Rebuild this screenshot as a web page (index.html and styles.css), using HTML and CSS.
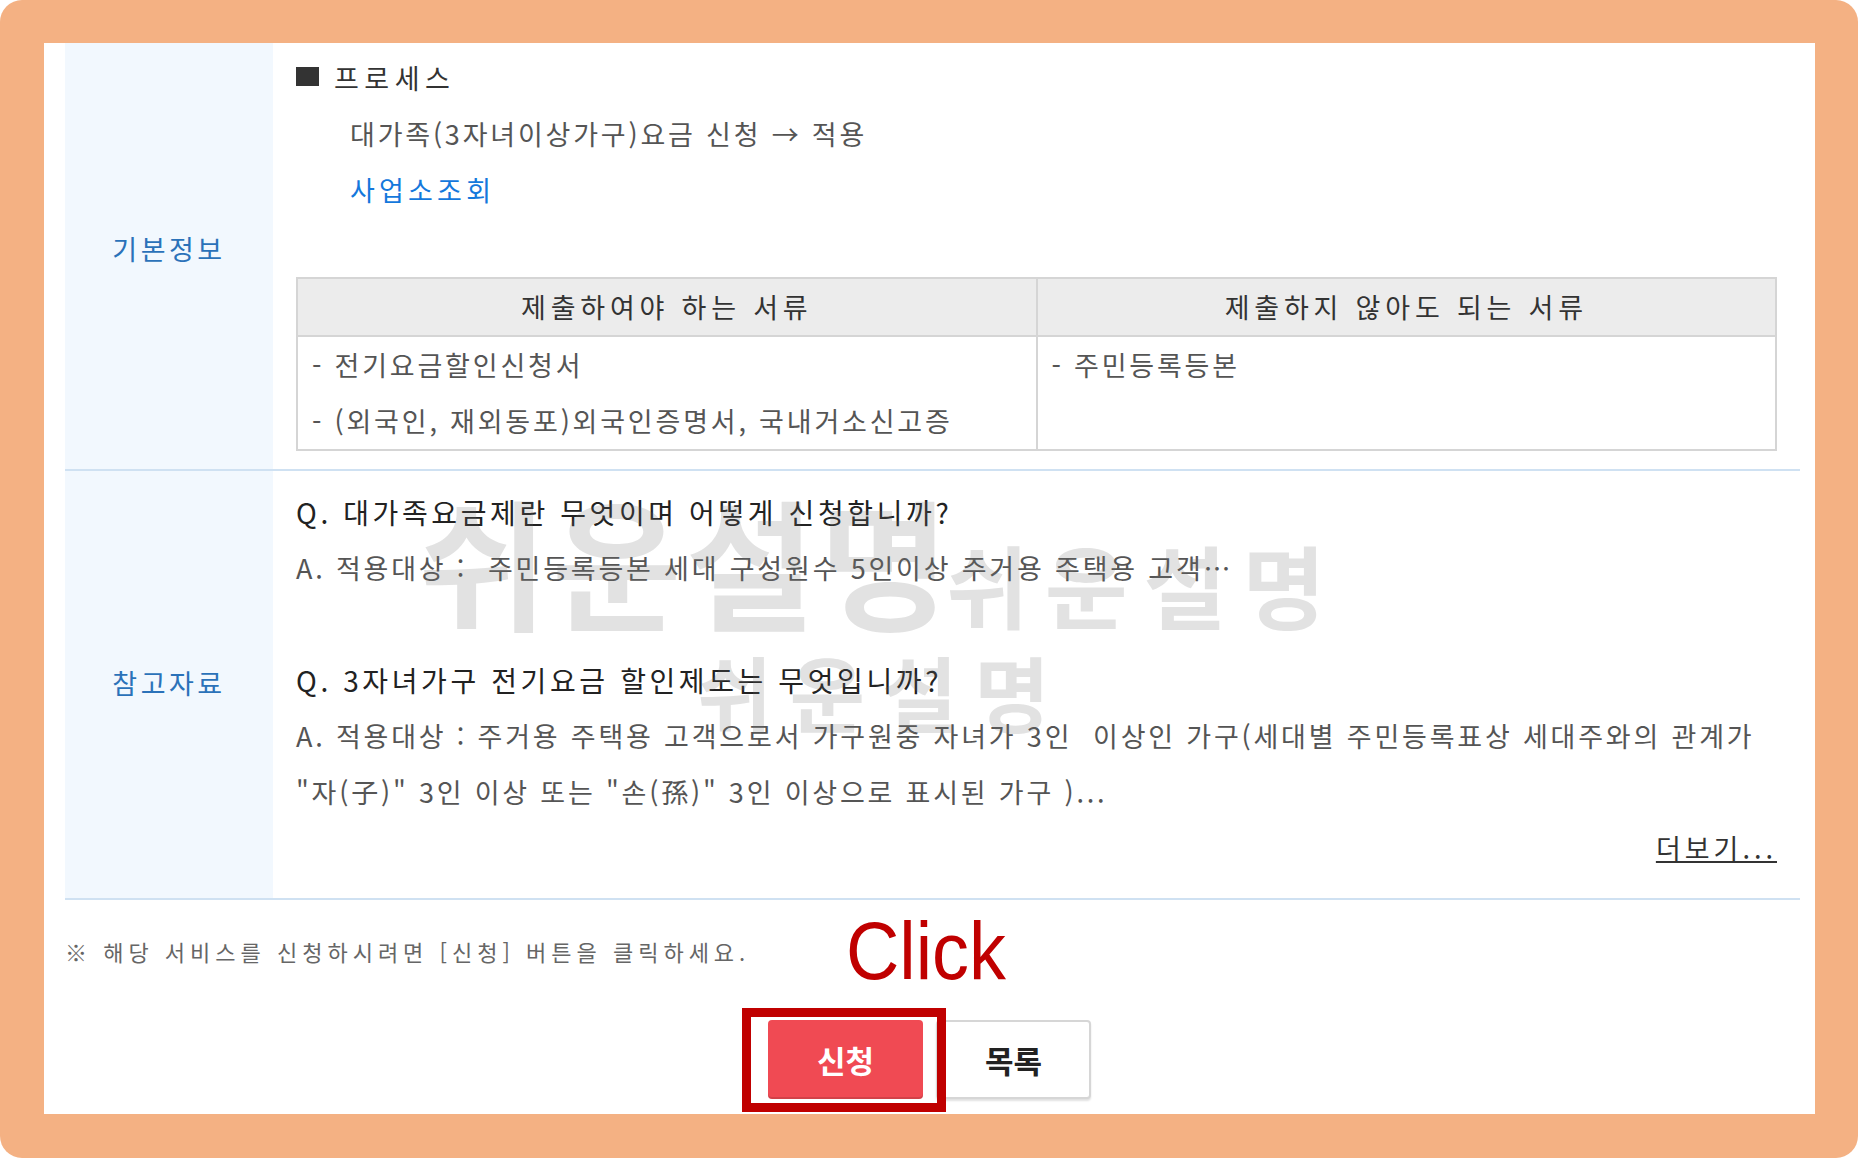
FILE: index.html
```html
<!DOCTYPE html>
<html lang="ko">
  <head>
    <meta charset="UTF-8" />
    <meta name="viewport" content="width=device-width, initial-scale=1.0" />
    <title>대가족요금 신청</title>
    <link rel="stylesheet" href="styles.css">
  </head>
  <body>
    <div class="frame">
      <div class="screen">
        <div class="info">
          <div class="infoRow infoRowTop">
            <div class="infoLabel">기본정보</div>
            <div class="infoBody">
              <p class="procTitle"><span class="procMark"></span>프로세스</p>
              <p class="procDesc">대가족(3자녀이상가구)요금 신청 → 적용</p>
              <p class="procLink"><a href="#">사업소조회</a></p>
              <table class="docTable">
                <thead>
                  <tr>
                    <th>제출하여야 하는 서류</th>
                    <th>제출하지 않아도 되는 서류</th>
                  </tr>
                </thead>
                <tbody>
                  <tr>
                    <td>
                      - 전기요금할인신청서<br />
                      - (외국인, 재외동포)외국인증명서, 국내거소신고증
                    </td>
                    <td>- 주민등록등본</td>
                  </tr>
                </tbody>
              </table>
            </div>
          </div>
          <div class="infoRow infoRowFaq">
            <div class="infoLabel">참고자료</div>
            <div class="infoBody">
              <div class="faq">
                <p class="faqQ">Q. 대가족요금제란 무엇이며 어떻게 신청합니까?</p>
                <p class="faqA">A. 적용대상 :&nbsp; 주민등록등본 세대 구성원수 5인이상 주거용 주택용 고객…</p>
              </div>
              <div class="faq">
                <p class="faqQ">Q. 3자녀가구 전기요금 할인제도는 무엇입니까?</p>
                <p class="faqA">
                  A. 적용대상 : 주거용 주택용 고객으로서 가구원중 자녀가 3인&nbsp; 이상인 가구(세대별 주민등록표상 세대주와의 관계가<br />
                  "자(子)" 3인 이상 또는 "손(孫)" 3인 이상으로 표시된 가구 )...
                </p>
              </div>
              <p class="more"><a href="#">더보기...</a></p>
            </div>
          </div>
        </div>

        <p class="notice">※ 해당 서비스를 신청하시려면 [신청] 버튼을 클릭하세요.</p>

        <div class="btns">
          <div class="btnWrap">
            <a href="#" class="btn btnApply">신청</a>
            <span class="hintBox"></span>
            <span class="hintText">Click</span>
          </div>
          <a href="#" class="btn btnList">목록</a>
        </div>
      </div>

      <div class="watermark wm1">쉬운설명</div>
      <div class="watermark wm2">쉬운설명</div>
      <div class="watermark wm3">쉬운설명</div>
    </div>
  </body>
</html>
```

FILE: styles.css
```css
* {
  box-sizing: border-box;
}
body {
  margin: 0;
  background: #fff;
  font-family: "Noto Sans CJK KR", "Noto Sans", sans-serif;
}
p {
  margin: 0;
}
.frame {
  position: relative;
  width: 1858px;
  height: 1158px;
  padding: 43px 43px 44px 44px;
  background: #f4b183;
  border-radius: 22px;
}
.screen {
  height: 100%;
  background: #fff;
  overflow: hidden;
  padding: 0 15px 0 21px;
}
.infoRow {
  display: grid;
  grid-template-columns: 208px 1fr;
  border-bottom: 2px solid #cfe1f2;
}
.infoRowTop {
  margin-top: -10px;
}
.infoLabel {
  display: flex;
  align-items: center;
  justify-content: center;
  padding-bottom: 5px;
  background: #f2f8fe;
  color: #2b72b9;
  font-size: 27px;
  letter-spacing: 3.5px;
}
.infoBody {
  padding: 17px 23px 18px;
  font-size: 27px;
  line-height: 56px;
  color: #555;
  letter-spacing: 2.8px;
}
.infoRowFaq .infoBody {
  padding: 13px 23px 22px;
}
.procTitle {
  color: #333;
  letter-spacing: 5.5px;
}
.procMark {
  display: inline-block;
  width: 23px;
  height: 19px;
  margin-right: 15px;
  background: #333;
  vertical-align: 3px;
}
.procDesc,
.procLink {
  padding-left: 54px;
}
.procLink a {
  color: #1478dc;
  text-decoration: none;
  letter-spacing: 4.2px;
}
.docTable {
  width: 100%;
  margin-top: 59px;
  border-collapse: collapse;
  table-layout: fixed;
}
.docTable th,
.docTable td {
  border: 2px solid #d5d5d5;
}
.docTable th {
  background: #ececec;
  color: #333;
  font-weight: normal;
  line-height: 54px;
  letter-spacing: 4.8px;
}
.docTable td {
  padding: 0 14px;
  vertical-align: top;
  line-height: 56px;
}
.faq + .faq {
  margin-top: 56px;
}
.faqQ {
  color: #222;
  font-size: 28px;
  letter-spacing: 3.6px;
}
.more {
  text-align: right;
}
.more a {
  color: #333;
  letter-spacing: 4px;
}
.notice {
  margin-top: 36px;
  font-size: 22px;
  line-height: 30px;
  letter-spacing: 5px;
  color: #666;
}
.btns {
  display: flex;
  justify-content: center;
  gap: 13px;
  margin-top: 54px;
  padding-right: 6px;
}
.btnWrap {
  position: relative;
}
.btn {
  display: flex;
  align-items: center;
  justify-content: center;
  width: 155px;
  height: 79px;
  border-radius: 4px;
  font-size: 31px;
  font-weight: bold;
  text-decoration: none;
}
.btnApply {
  background: #f04a53;
  color: #fff;
  box-shadow: inset 0 -2px 0 rgba(0, 0, 0, 0.12);
}
.btnList {
  background: #fff;
  color: #222;
  border: 2px solid #d6d6d6;
  box-shadow: 0 2px 2px rgba(0, 0, 0, 0.12);
}
.hintBox {
  position: absolute;
  top: -12px;
  left: -26px;
  right: -23px;
  bottom: -13px;
  border: 9px solid #c00000;
}
.hintText {
  position: absolute;
  left: 78px;
  top: -110px;
  font-family: "Liberation Sans", Arial, sans-serif;
  font-size: 82px;
  line-height: 1;
  color: #c00000;
  white-space: nowrap;
  transform: scaleX(0.9);
  transform-origin: left top;
}
.watermark {
  position: absolute;
  font-weight: bold;
  line-height: 1;
  color: rgba(110, 110, 110, 0.2);
  white-space: nowrap;
  pointer-events: none;
}
.wm1 {
  left: 418px;
  top: 488px;
  font-size: 141px;
  letter-spacing: 4px;
}
.wm2 {
  left: 946px;
  top: 538px;
  font-size: 90px;
  letter-spacing: 16px;
}
.wm3 {
  left: 697px;
  top: 650px;
  font-size: 82px;
  letter-spacing: 17px;
}
```
